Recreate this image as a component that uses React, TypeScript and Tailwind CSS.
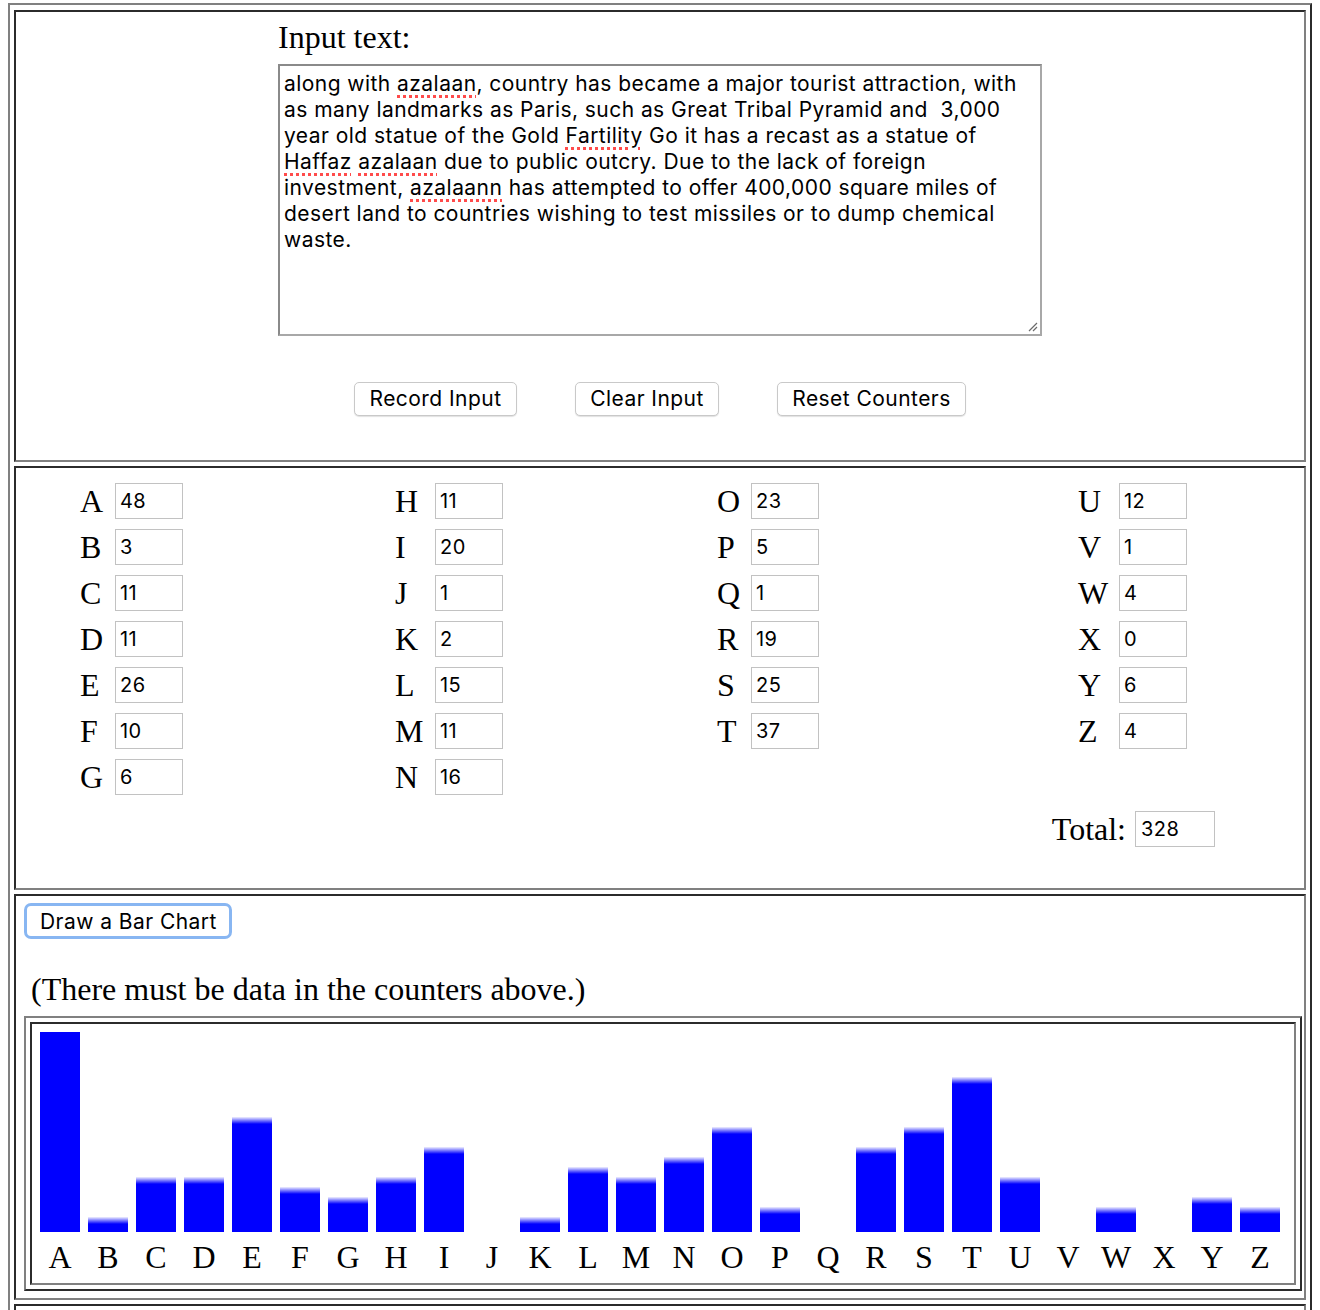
import React from "react";

const SERIF = "font-['Liberation_Serif','Times_New_Roman',serif]";
const SANS = "font-['Inter','Liberation_Sans',sans-serif] tracking-[0.45px]";

const COUNTS: [string, number][][] = [
  [["A", 48], ["B", 3], ["C", 11], ["D", 11], ["E", 26], ["F", 10], ["G", 6]],
  [["H", 11], ["I", 20], ["J", 1], ["K", 2], ["L", 15], ["M", 11], ["N", 16]],
  [["O", 23], ["P", 5], ["Q", 1], ["R", 19], ["S", 25], ["T", 37]],
  [["U", 12], ["V", 1], ["W", 4], ["X", 0], ["Y", 6], ["Z", 4]],
];

// column geometry taken from the auto-sized table
const COLS = [
  { width: "w-[315px]", letter: "w-[35px]" },
  { width: "w-[322px]", letter: "w-[40px]" },
  { width: "w-[361px]", letter: "w-[34px]" },
  { width: "w-[200px]", letter: "w-[41px]" },
];

// values the chart was drawn from (tens of px per unit)
const CHART: [string, number][] = [
  ["A", 20], ["B", 1], ["C", 5], ["D", 5], ["E", 11], ["F", 4], ["G", 3],
  ["H", 5], ["I", 8], ["J", 0], ["K", 1], ["L", 6], ["M", 5], ["N", 7],
  ["O", 10], ["P", 2], ["Q", 0], ["R", 8], ["S", 10], ["T", 15], ["U", 5],
  ["V", 0], ["W", 2], ["X", 0], ["Y", 3], ["Z", 2],
];

const cell =
  "border-2 border-t-[#2b2b2b] border-l-[#2b2b2b] border-r-[#808080] border-b-[#808080]";
const outset =
  "border-2 border-t-[#808080] border-l-[#808080] border-r-[#2b2b2b] border-b-[#2b2b2b]";

function Typo({ children }: { children: React.ReactNode }) {
  return (
    <span className="underline decoration-dotted decoration-[#ff4b4b] decoration-[3px] underline-offset-[4px]">
      {children}
    </span>
  );
}

function Btn({ label, w }: { label: string; w: string }) {
  return (
    <button
      className={`${w} h-[34px] rounded-[5px] border border-[#c9c9c9] bg-white shadow-[0_1px_1px_rgba(0,0,0,0.12)] text-[21px] text-black ${SANS}`}
    >
      {label}
    </button>
  );
}

export default function App() {
  return (
    <div className="h-[1310px] overflow-hidden bg-white pt-[3px]">
      <div className={`mx-2 ${outset} pt-[5px] px-1 pb-1 flex flex-col gap-1`}>
        {/* Input area */}
        <div className={`${cell} h-[452px] pt-[7px]`}>
          <div className="w-[764px] mx-auto">
            <div className={`${SERIF} text-[32px] leading-[37px] text-black mb-[8px]`}>
              Input text:
            </div>
            <div
              className={`relative h-[272px] border-2 border-t-[#8a8a8a] border-l-[#8a8a8a] border-r-[#a8a8a8] border-b-[#a8a8a8] px-[4px] pt-[5px] ${SANS} text-[21px] leading-[26px] text-black whitespace-pre`}
            >
              <div>
                along with <Typo>azalaan</Typo>, country has became a major tourist attraction, with
              </div>
              <div>as many landmarks as Paris, such as Great Tribal Pyramid and  3,000</div>
              <div>
                year old statue of the Gold <Typo>Fartility</Typo> Go it has a recast as a statue of
              </div>
              <div>
                <Typo>Haffaz</Typo> <Typo>azalaan</Typo> due to public outcry. Due to the lack of foreign
              </div>
              <div>
                investment, <Typo>azalaann</Typo> has attempted to offer 400,000 square miles of
              </div>
              <div>desert land to countries wishing to test missiles or to dump chemical</div>
              <div>waste.</div>
              <svg
                className="absolute right-[2px] bottom-[2px]"
                width="12"
                height="12"
                viewBox="0 0 12 12"
              >
                <path d="M11 3 L3 11 M11 7 L7 11" stroke="#6b6b6b" strokeWidth="1.2" />
              </svg>
            </div>
          </div>
          <div className="flex justify-center gap-[58px] mt-[46px]">
            <Btn label="Record Input" w="w-[163px]" />
            <Btn label="Clear Input" w="w-[144px]" />
            <Btn label="Reset Counters" w="w-[189px]" />
          </div>
        </div>

        {/* Counters */}
        <div className={`${cell} h-[424px] pt-[15px]`}>
          <div className="flex pl-[64px]">
            {COUNTS.map((col, ci) => (
              <div key={ci} className={`${COLS[ci].width} flex flex-col gap-[10px]`}>
                {col.map(([l, n]) => (
                  <div key={l} className="flex items-center h-[36px]">
                    <span className={`${COLS[ci].letter} ${SERIF} text-[32px] leading-[36px] text-black`}>
                      {l}
                    </span>
                    <div
                      className={`w-[68px] h-[36px] border border-[#c2c2c2] pl-[4px] flex items-center ${SANS} text-[20px] text-black`}
                    >
                      {n}
                    </div>
                  </div>
                ))}
              </div>
            ))}
          </div>
          <div className="flex justify-end items-center pr-[89px] gap-[9px] mt-[16px]">
            <span className={`${SERIF} text-[32px] leading-[36px] text-black`}>Total:</span>
            <div
              className={`w-[80px] h-[36px] border border-[#c2c2c2] pl-[5px] flex items-center ${SANS} text-[20px] text-black`}
            >
              328
            </div>
          </div>
        </div>

        {/* Chart */}
        <div className={`${cell} pt-[7px] pb-[7px] pl-[8px]`}>
          <button
            className={`w-[208px] h-[36px] rounded-[7px] border-[3px] border-[#88b6f2] bg-white text-left pl-[13px] ${SANS} text-[21px] text-black`}
          >
            Draw a Bar Chart
          </button>
          <div className={`${SERIF} text-[32px] leading-[37px] text-black mt-[32px] mb-[8px] pl-[7px]`}>
            (There must be data in the counters above.)
          </div>
          <div className={`w-[1278px] ${outset} p-1`}>
            <div className={`${cell} pt-[8px] pl-[8px] pb-[7px]`}>
              <div className="flex gap-[8px]">
                {CHART.map(([l, v]) => (
                  <div key={l} className="w-[40px] flex flex-col items-center">
                    <div className="h-[200px] w-full flex items-end">
                      {v > 0 && (
                        <div
                          className={
                            v >= 20
                              ? "w-full bg-[#0000ff]"
                              : "w-full bg-[linear-gradient(to_bottom,rgba(0,0,255,0.06),#0000ff_7px)]"
                          }
                          style={{ height: v >= 20 ? 200 : v * 10 + 5 }}
                        />
                      )}
                    </div>
                    <span className={`${SERIF} text-[32px] leading-[37px] mt-[7px] text-black`}>{l}</span>
                  </div>
                ))}
              </div>
            </div>
          </div>
        </div>

        <div className={`${cell} h-[120px]`} />
      </div>
    </div>
  );
}
